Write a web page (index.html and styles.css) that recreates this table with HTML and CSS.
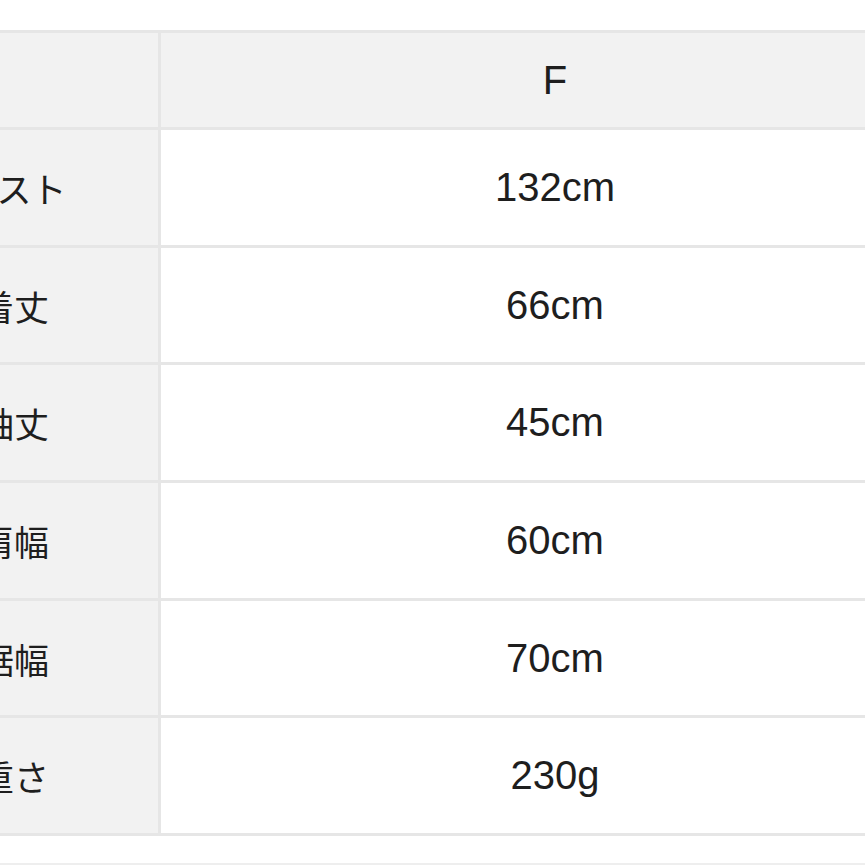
FILE: index.html
```html
<!DOCTYPE html>
<html lang="ja">
<head>
<meta charset="utf-8">
<title>サイズ表</title>
<link rel="stylesheet" href="styles.css">
</head>
<body>
<div class="page">
  <div class="size-table">
    <div class="cell head label"></div>
    <div class="cell head value">F</div>
    <div class="cell label">バスト</div>
    <div class="cell value">132cm</div>
    <div class="cell label">着丈</div>
    <div class="cell value">66cm</div>
    <div class="cell label">袖丈</div>
    <div class="cell value">45cm</div>
    <div class="cell label">肩幅</div>
    <div class="cell value">60cm</div>
    <div class="cell label">裾幅</div>
    <div class="cell value">70cm</div>
    <div class="cell label">重さ</div>
    <div class="cell value">230g</div>
  </div>
  <div class="rule"></div>
</div>
</body>
</html>
```
FILE: styles.css
```css
html, body {
  margin: 0;
  padding: 0;
  background: #ffffff;
  overflow: hidden;
}
.page {
  width: 865px;
  height: 865px;
  overflow: hidden;
  padding-top: 30px;
  box-sizing: border-box;
}
.size-table {
  display: grid;
  grid-template-columns: 288px 788px;
  grid-template-rows: 94px repeat(6, 114.7px);
  gap: 3px;
  padding: 3px;
  width: max-content;
  margin-left: -133px;
  background: #e6e6e6;
}
.cell {
  display: flex;
  align-items: center;
  justify-content: center;
  color: #1e1e1e;
}
.label {
  background: #f2f2f2;
  font-family: "Noto Sans CJK JP", "Liberation Sans", sans-serif;
  font-size: 35px;
}
.value {
  background: #ffffff;
  font-family: "Liberation Sans", "Noto Sans CJK JP", sans-serif;
  font-size: 40px;
}
.head {
  background: #f2f2f2;
}
.rule {
  margin-top: 27px;
  height: 2px;
  background: #eeeeee;
}
```
